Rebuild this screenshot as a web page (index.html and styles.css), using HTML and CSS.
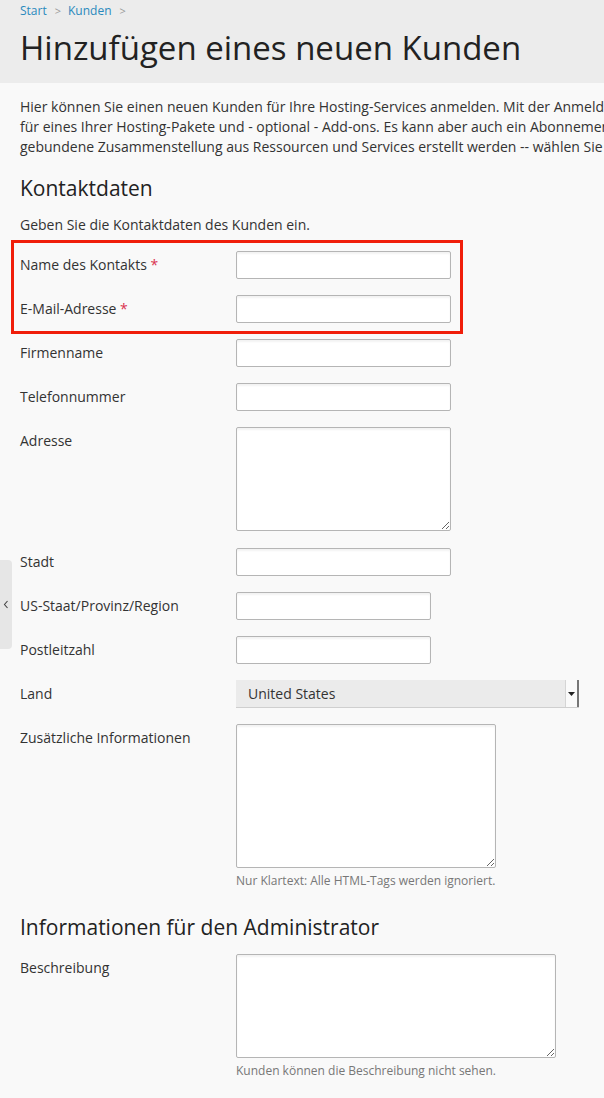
FILE: index.html
```html
<!DOCTYPE html>
<html lang="de">
<head>
<meta charset="utf-8">
<title>Hinzufügen eines neuen Kunden</title>
<link rel="stylesheet" href="styles.css">
</head>
<body>
<div class="page">
  <header class="page-header">
    <nav class="breadcrumb">
      <a href="#">Start</a><span class="sep">&gt;</span><a href="#">Kunden</a><span class="sep">&gt;</span>
    </nav>
    <h1 class="title">Hinzufügen eines neuen Kunden</h1>
  </header>

  <main class="content">
    <p class="intro">Hier können Sie einen neuen Kunden für Ihre Hosting-Services anmelden. Mit der Anmeldung<br>für eines Ihrer Hosting-Pakete und - optional - Add-ons. Es kann aber auch ein Abonnement<br>gebundene Zusammenstellung aus Ressourcen und Services erstellt werden -- wählen Sie</p>

    <h2 class="section-title">Kontaktdaten</h2>
    <p class="section-hint">Geben Sie die Kontaktdaten des Kunden ein.</p>

    <div class="form">
      <div class="row">
        <label class="label">Name des Kontakts <span class="req">*</span></label>
        <input class="input w215" type="text">
      </div>
      <div class="row">
        <label class="label">E-Mail-Adresse <span class="req">*</span></label>
        <input class="input w215" type="text">
      </div>
      <div class="row">
        <label class="label">Firmenname</label>
        <input class="input w215" type="text">
      </div>
      <div class="row">
        <label class="label">Telefonnummer</label>
        <input class="input w215" type="text">
      </div>
      <div class="row row-area">
        <label class="label">Adresse</label>
        <textarea class="area w215 h104"></textarea>
      </div>
      <div class="row">
        <label class="label">Stadt</label>
        <input class="input w215" type="text">
      </div>
      <div class="row">
        <label class="label">US-Staat/Provinz/Region</label>
        <input class="input w195" type="text">
      </div>
      <div class="row">
        <label class="label">Postleitzahl</label>
        <input class="input w195" type="text">
      </div>
      <div class="row">
        <label class="label">Land</label>
        <div class="select">
          <span class="select-value">United States</span>
          <span class="select-btn"><svg width="7" height="4" viewBox="0 0 7 4"><path d="M0 0h7L3.5 4z" fill="#222"/></svg></span>
        </div>
      </div>
      <div class="row">
        <label class="label">Zusätzliche Informationen</label>
        <div class="field">
          <textarea class="area w260 h144"></textarea>
          <div class="field-hint">Nur Klartext: Alle HTML-Tags werden ignoriert.</div>
        </div>
      </div>
    </div>

    <h2 class="section-title admin">Informationen für den Administrator</h2>
    <div class="form">
      <div class="row">
        <label class="label">Beschreibung</label>
        <div class="field">
          <textarea class="area w320 h104"></textarea>
          <div class="field-hint">Kunden können die Beschreibung nicht sehen.</div>
        </div>
      </div>
    </div>
  </main>

  <div class="side-tab"><svg width="6" height="9" viewBox="0 0 6 9"><path d="M4.5 1L1.5 4.5L4.5 8" fill="none" stroke="#444" stroke-width="1.1"/></svg></div>
  <div class="highlight"></div>
</div>
</body>
</html>
```

FILE: styles.css
```css
* { box-sizing: border-box; }
html, body { margin: 0; padding: 0; }
body {
  background: #f9f9f9;
  font-family: "Open Sans", "Liberation Sans", sans-serif;
  color: #333;
  width: 604px;
  height: 1098px;
  overflow: hidden;
}
.page {
  position: relative;
  width: 604px;
  height: 1098px;
  overflow: hidden;
}
.page-header {
  background: #ececec;
  height: 83px;
  padding: 3px 20px 0;
}
.breadcrumb {
  font-size: 12px;
  line-height: 16px;
  white-space: nowrap;
}
.breadcrumb a {
  color: #2a89bd;
  text-decoration: none;
}
.breadcrumb .sep {
  color: #9a9a9a;
  margin: 0 7px 0 8px;
  font-size: 11px;
}
.title {
  margin: 9px 0 0;
  font-size: 33px;
  line-height: 40px;
  font-weight: 400;
  color: #222;
  white-space: nowrap;
}
.content {
  padding: 14px 20px 0;
}
.intro {
  margin: 0;
  font-size: 14px;
  line-height: 20px;
  color: #333;
  white-space: nowrap;
}
.section-title {
  margin: 19px 0 0;
  font-size: 21px;
  line-height: 24px;
  font-weight: 400;
  color: #222;
}
.section-title.admin {
  margin-top: 26px;
}
.section-hint {
  margin: 15px 0 0;
  font-size: 14px;
  line-height: 20px;
}
.form {
  display: flex;
  flex-direction: column;
  gap: 16px;
  margin-top: 16px;
}
.section-title.admin + .form {
  margin-top: 15px;
}
.row {
  display: flex;
  align-items: flex-start;
}
.row-area {
  margin-bottom: 1px;
}
.label {
  flex: 0 0 216px;
  font-size: 14px;
  line-height: 28px;
  color: #333;
}
.req {
  color: #d9334f;
}
.input, .area {
  display: block;
  margin: 0;
  background: #fff;
  border: 1px solid #b5b5b5;
  border-radius: 2px;
  box-shadow: inset 0 2px 2px rgba(0,0,0,0.05);
  font-family: inherit;
  font-size: 14px;
}
.input { height: 28px; }
.area { resize: both; }
.w215 { width: 215px; }
.w195 { width: 195px; }
.w260 { width: 260px; }
.w320 { width: 320px; }
.h104 { height: 104px; }
.h144 { height: 144px; }
.field-hint {
  margin-top: 5px;
  font-size: 12px;
  line-height: 16px;
  color: #777;
}
.select {
  display: flex;
  align-items: center;
  width: 343px;
  height: 28px;
  background: #ebebeb;
  border-bottom: 1px solid #cfcfcf;
}
.select-value {
  flex: 1;
  padding-left: 12px;
  font-size: 14px;
  color: #333;
}
.select-btn {
  width: 14px;
  height: 27px;
  display: flex;
  align-items: center;
  justify-content: center;
  background: #fafafa;
  border-left: 1px solid #d5d5d5;
  border-right: 2px solid #777;
}
.side-tab {
  position: absolute;
  left: 0;
  top: 560px;
  width: 12px;
  height: 89px;
  background: #e6e6e6;
  border-radius: 0 4px 4px 0;
  display: flex;
  align-items: center;
  justify-content: center;
}
.highlight {
  position: absolute;
  left: 11px;
  top: 240px;
  width: 452px;
  height: 94px;
  border: 3px solid #f01e0a;
}
```
